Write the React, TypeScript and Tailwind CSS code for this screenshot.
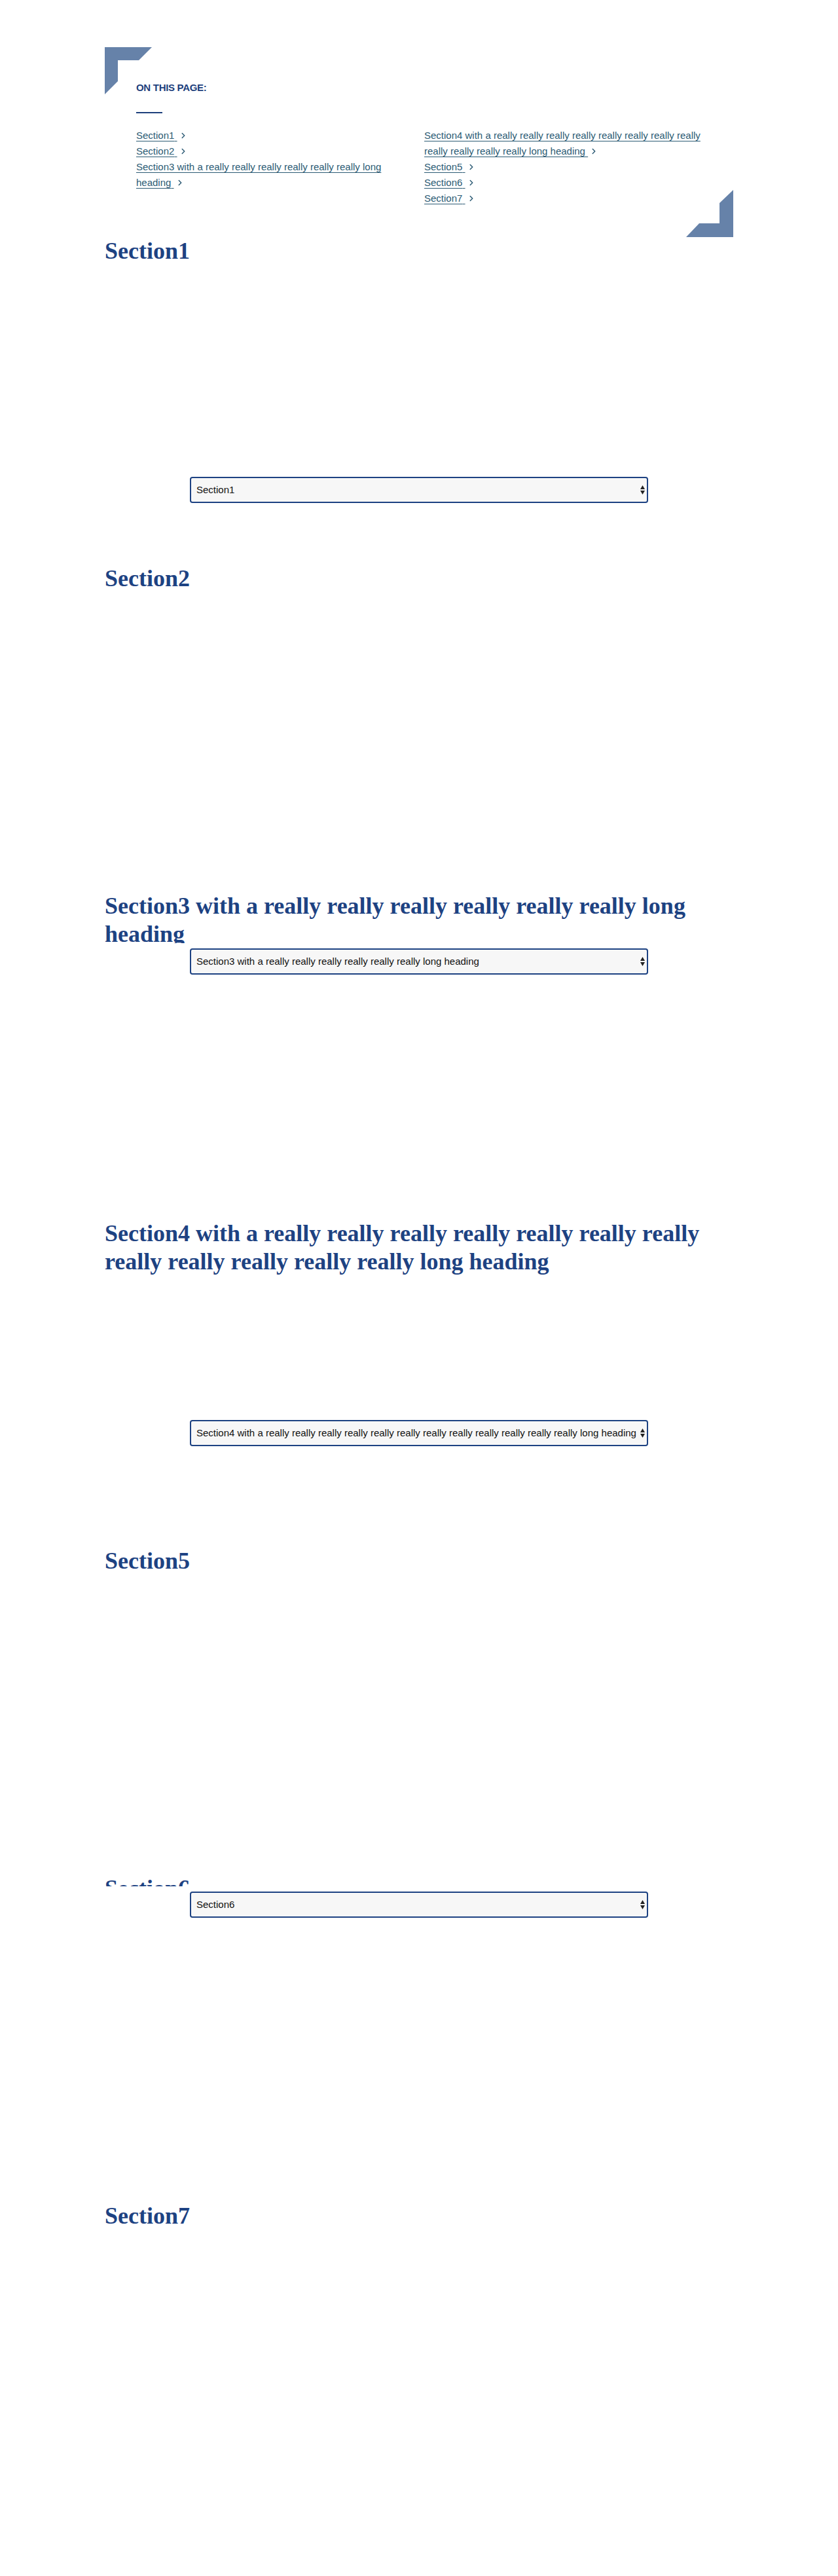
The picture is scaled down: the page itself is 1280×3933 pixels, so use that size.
import React, { useState } from 'react';
import { ChevronRight } from 'lucide-react';

const sections = [
  'Section1',
  'Section2',
  'Section3 with a really really really really really really long heading',
  'Section4 with a really really really really really really really really really really really really long heading',
  'Section5',
  'Section6',
  'Section7',
];

// where the sticky jump bar shows up in the capture
const jumpBars = [
  { top: 'top-[720px]', index: 0 },
  { top: 'top-[1440px]', index: 2 },
  { top: 'top-[2160px]', index: 3 },
  { top: 'top-[2880px]', index: 5 },
];

const TocLink: React.FC<{ label: string; index: number }> = ({ label, index }) => (
  <li className="leading-6">
    <a href={`#section-${index + 1}`} className="text-[#2c5b74] underline decoration-1 underline-offset-[3px]">
      {label}{' '}
    </a>
    <ChevronRight size={14} strokeWidth={2.5} className="ml-0.5 inline-block align-[-2px] text-[#2c5b74]" />
  </li>
);

const JumpSelect: React.FC<{ index: number }> = ({ index }) => {
  const [value, setValue] = useState(sections[index]);

  return (
    <div className="relative mx-auto w-[700px]">
      <select
        value={value}
        onChange={e => setValue(e.target.value)}
        className="block h-10 w-full appearance-none rounded border-2 border-[#1d4282] bg-[#f7f7f7] pl-2 pr-3 text-[15px] text-[#111] focus:outline-none"
      >
        {sections.map(s => (
          <option key={s} value={s}>{s}</option>
        ))}
      </select>
      <svg className="pointer-events-none absolute right-[5px] top-[13px]" width="7" height="14" viewBox="0 0 7 14">
        <polygon points="0,6 3.5,0 7,6" fill="#222" />
        <polygon points="0,8 7,8 3.5,14" fill="#222" />
      </svg>
    </div>
  );
};

const App: React.FC = () => {
  return (
    <div className="relative min-h-[3933px] bg-white pt-[72px] pb-[71px] font-['Liberation_Sans',Arial,sans-serif] text-[15px]">
      <nav className="relative mx-auto w-[960px] px-12 pt-[50px] pb-[47px]">
        <svg className="absolute left-0 top-0" width="72" height="72" viewBox="0 0 72 72">
          <polygon points="0,0 72,0 52,20 20,20 20,52 0,72" fill="#6682a9" />
        </svg>
        <svg className="absolute bottom-0 right-0" width="72" height="72" viewBox="0 0 72 72">
          <polygon points="72,72 0,72 20,51 51,51 51,20 72,0" fill="#6682a9" />
        </svg>

        <h2 className="text-[15px] font-bold leading-6 tracking-[-0.3px] text-[#1d3f7c]">
          ON THIS PAGE:
        </h2>
        <div className="mt-[25px] h-[2px] w-10 bg-[#1d3f7c]" />

        <div className="mt-[22px] grid grid-cols-2 gap-x-4">
          <ul>
            {sections.slice(0, 3).map((s, i) => (
              <TocLink key={s} label={s} index={i} />
            ))}
          </ul>
          <ul>
            {sections.slice(3).map((s, i) => (
              <TocLink key={s} label={s} index={i + 3} />
            ))}
          </ul>
        </div>
      </nav>

      <main className="mx-auto w-[960px]">
        {sections.map((s, i) => (
          <section key={s} id={`section-${i + 1}`} className="h-[500px]">
            <h2 className="font-['Liberation_Serif','Times_New_Roman',serif] text-[36px] font-bold leading-[43px] text-[#1d4282]">
              {s}
            </h2>
          </section>
        ))}
      </main>

      {jumpBars.map(bar => (
        <div key={bar.top} className={`absolute left-0 right-0 bg-white py-2 ${bar.top}`}>
          <JumpSelect index={bar.index} />
        </div>
      ))}
    </div>
  );
};

export default App;
